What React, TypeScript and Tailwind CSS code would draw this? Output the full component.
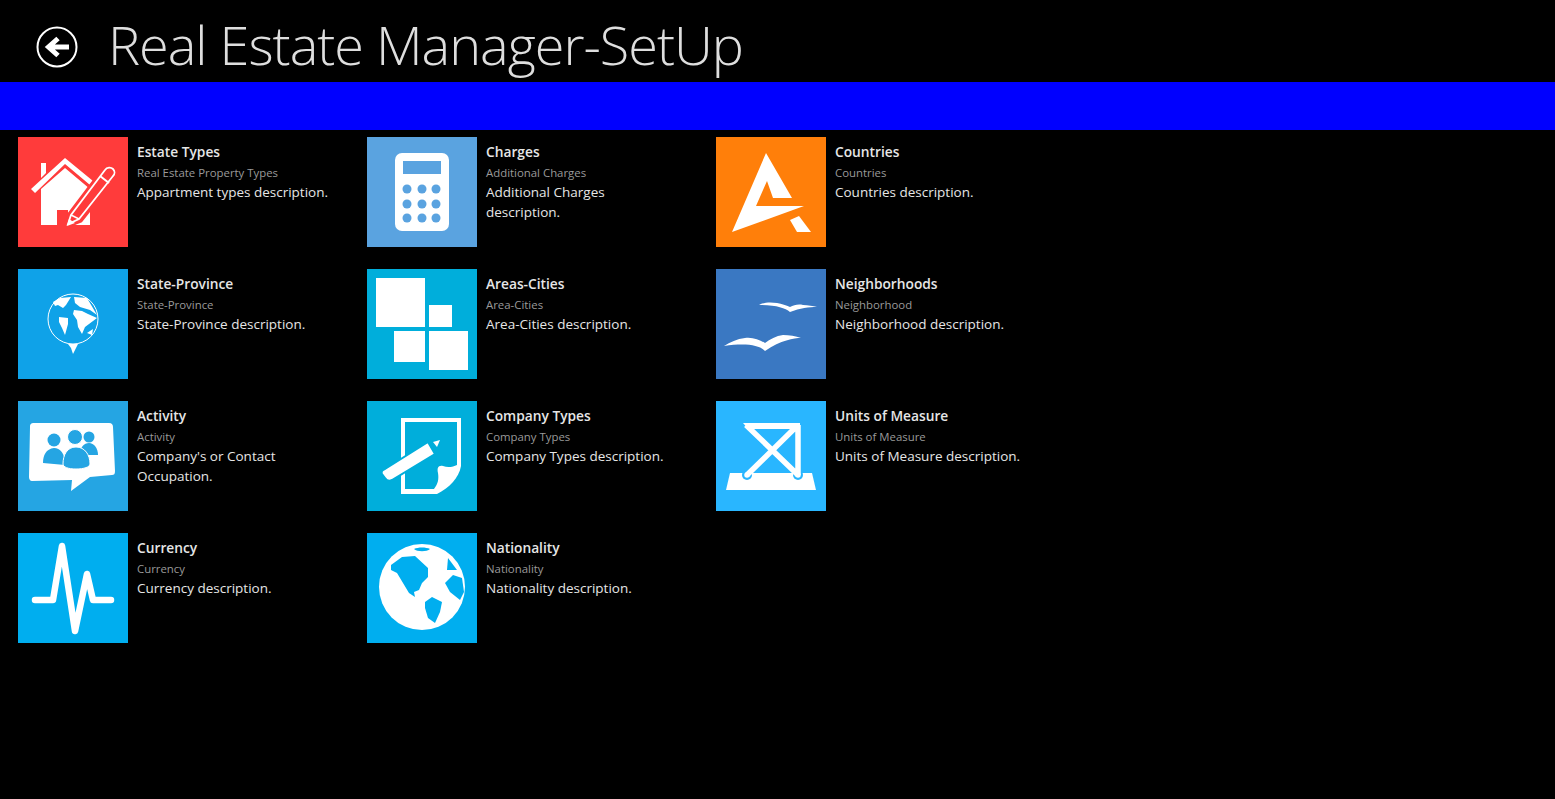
import React from 'react';

const HouseIcon = () => (
  <svg viewBox="0 0 110 110" className="h-full w-full">
    <path d="M23 26h5v10l-5 5z" fill="#fff" />
    <path d="M13 52L47 21l28 23-3 4-25-21-30 29z" fill="#fff" />
    <path d="M23 52L47 31l25 21v36H50V73H39v15H23z" fill="#fff" />
    <path d="M48 90l3-13 34-45c3-3 8-4 11-1s3 7 1 10L63 84z" fill="#ff3b3b" stroke="#ff3b3b" strokeWidth="3" />
    <path d="M50 87l3-9 34-45c2-3 6-3 8-1s2 5 0 7L61 82z" fill="#ff3b3b" stroke="#fff" strokeWidth="1.8" />
    <path d="M82 39l9 7" stroke="#fff" strokeWidth="2" />
    <path d="M53 78l8 4" stroke="#fff" strokeWidth="1.5" />
    <path d="M49 89l2-7 6 4z" fill="#fff" />
  </svg>
);

const SmallGlobeIcon = () => (
  <svg viewBox="0 0 110 110" className="h-full w-full">
    <circle cx="55" cy="50" r="25" fill="none" stroke="#fff" strokeWidth="1" />
    <path d="M50 75h10l-2 4-3 6-2-6z" fill="#fff" />
    <path d="M35 33l7-4 11-1-5 8-3 3-5-3-3 1z" fill="#fff" />
    <path d="M41 48l9 1 0 6-3 11-3-7-3-6z" fill="#fff" />
    <path d="M56 41l8 1 6 3 9 4-12 9-3 7-4-7-1-7-4-6z" fill="#fff" />
    <path d="M56 28l13 1 10 17-7-5-10-3-5-4z" fill="#fff" />
    <path d="M69 64l6-4-1 6z" fill="#fff" />
  </svg>
);

const ActivityIcon = () => (
  <svg viewBox="0 0 110 110" className="h-full w-full">
    <path d="M16 22h75c3 0 4 2 4 4l2 44c0 3-1 4-3 4l-22 2-19 14 1-11-40 1c-2 0-3-2-3-4l1-50c0-3 1-4 4-4z" fill="#fff" />
    <circle cx="36" cy="39" r="6.500" fill="#25a5e3" />
    <path d="M25 62c0-8 3-14 11-15 6 0 11 5 11 17z" fill="#25a5e3" />
    <circle cx="71" cy="36" r="5.500" fill="#25a5e3" />
    <path d="M62 54c0-8 4-12 9-12 5 0 9 5 9 12z" fill="#25a5e3" />
    <circle cx="57" cy="36" r="7.500" fill="#25a5e3" stroke="#fff" strokeWidth="1" />
    <path d="M45 63c0-9 4-17 13-17 9 0 14 8 14 17 0 3-6 5-14 5s-13-2-13-5z" fill="#25a5e3" stroke="#fff" strokeWidth="1" />
  </svg>
);

const PulseIcon = () => (
  <svg viewBox="0 0 110 110" className="h-full w-full">
    <path d="M17 67h18l9-54 13 85 12-57 6 26h18" fill="none" stroke="#fff" strokeWidth="6.500" strokeLinecap="round" strokeLinejoin="round" />
  </svg>
);

const CalculatorIcon = () => {
  const xs = [40, 55, 69];
  const ys = [52, 67, 81];
  return (
    <svg viewBox="0 0 110 110" className="h-full w-full">
      <rect x="28" y="16" width="54" height="78" rx="7" fill="#fff" />
      <rect x="36" y="24" width="38" height="13" fill="#5aa3e0" />
      {ys.map((y) => xs.map((x) => <circle key={`${x}-${y}`} cx={x} cy={y} r="4.500" fill="#5aa3e0" />))}
    </svg>
  );
};

const SquaresIcon = () => (
  <svg viewBox="0 0 110 110" className="h-full w-full" fill="#fff">
    <rect x="9" y="9" width="49" height="49" />
    <rect x="62" y="36" width="23" height="22" />
    <rect x="27" y="62" width="31" height="31" />
    <rect x="62" y="62" width="39" height="39" />
  </svg>
);

const NoteIcon = () => (
  <svg viewBox="0 0 110 110" className="h-full w-full">
    <path d="M34 17h60v48c-2 12-12 22-24 28H34z" fill="#fff" />
    <path d="M38 21h52v43c-4 2-9 3-14 1-5-1-6 2-5 7 1 6 0 11-4 16H38z" fill="#00aedb" />
    <path d="M18 68l43-27 7 12-43 26c-2 1-5 1-7-2l-3-4c-1-2 0-4 3-5z" fill="#fff" stroke="#00aedb" strokeWidth="2" />
    <path d="M66 41l7-2-3 7z" fill="#fff" />
  </svg>
);

const GlobeIcon = () => (
  <svg viewBox="0 0 110 110" className="h-full w-full">
    <circle cx="55" cy="54" r="43" fill="#fff" />
    <path d="M47 16c4-2 12-2 16 0-3 3-13 3-16 0z" fill="#00aeef" />
    <path d="M24 32l11-8 13-1 13 12 0 9-6 6-3 7-5 2 1 5-6-4-12-20-6-3z" fill="#00aeef" />
    <path d="M58 69l7-5 10 5-2 10-5 11-7-5-3-10z" fill="#00aeef" />
    <path d="M81 25l9 12H80z" fill="#00aeef" />
    <path d="M78 50l8-8 9 3 2 14-4 8-10-8z" fill="#00aeef" />
  </svg>
);

const LogoAIcon = () => (
  <svg viewBox="0 0 110 110" className="h-full w-full" fill="#fff">
    <path d="M50 16L76 61H57L51 44 40 69H88L16 95z" />
    <path d="M83 79L95 95H81L74 83z" />
  </svg>
);

const BirdsIcon = () => (
  <svg viewBox="0 0 110 110" className="h-full w-full" fill="#fff">
    <path d="M43 36c5-3 12-3 18-2 5 1 9 2 13 4 4-2 8-3 13-2 5 0 10 1 14 2-8 0-17 1-27 5-5-4-14-7-31-7z" />
    <path d="M8 77c6-4 13-7 21-8 8-1 15 2 20 5 5-4 11-7 18-8 6 0 13 1 18 3-7 0-20 2-36 13-6-6-19-8-41-5z" />
  </svg>
);

const ToolIcon = () => (
  <svg viewBox="0 0 110 110" className="h-full w-full">
    <path d="M14 72h82l4 17H10z" fill="#fff" />
    <circle cx="31" cy="74" r="5" fill="#29b6ff" />
    <circle cx="82" cy="74" r="5" fill="#29b6ff" />
    <path d="M30 24l52 50M82 24L31 74M82 24v50" fill="none" stroke="#fff" strokeWidth="5.500" />
    <circle cx="31" cy="74" r="2.750" fill="#fff" />
    <circle cx="82" cy="74" r="2.750" fill="#fff" />
    <path d="M27 22h57v6H38l-4 2z" fill="#fff" />
  </svg>
);

const items = [
  { title: 'Estate Types', sub: 'Real Estate Property Types', desc: 'Appartment types description.', tile: 'bg-[#ff3b3b]', icon: <HouseIcon /> },
  { title: 'Charges', sub: 'Additional Charges', desc: 'Additional Charges description.', tile: 'bg-[#5aa3e0]', icon: <CalculatorIcon /> },
  { title: 'Countries', sub: 'Countries', desc: 'Countries description.', tile: 'bg-[#ff7f0a]', icon: <LogoAIcon /> },
  { title: 'State-Province', sub: 'State-Province', desc: 'State-Province description.', tile: 'bg-[#0fa2e8]', icon: <SmallGlobeIcon /> },
  { title: 'Areas-Cities', sub: 'Area-Cities', desc: 'Area-Cities description.', tile: 'bg-[#00aedb]', icon: <SquaresIcon /> },
  { title: 'Neighborhoods', sub: 'Neighborhood', desc: 'Neighborhood description.', tile: 'bg-[#3a78c2]', icon: <BirdsIcon /> },
  { title: 'Activity', sub: 'Activity', desc: "Company's or Contact Occupation.", tile: 'bg-[#25a5e3]', icon: <ActivityIcon /> },
  { title: 'Company Types', sub: 'Company Types', desc: 'Company Types description.', tile: 'bg-[#00aedb]', icon: <NoteIcon /> },
  { title: 'Units of Measure', sub: 'Units of Measure', desc: 'Units of Measure description.', tile: 'bg-[#29b6ff]', icon: <ToolIcon /> },
  { title: 'Currency', sub: 'Currency', desc: 'Currency description.', tile: 'bg-[#00aeef]', icon: <PulseIcon /> },
  { title: 'Nationality', sub: 'Nationality', desc: 'Nationality description.', tile: 'bg-[#00aeef]', icon: <GlobeIcon /> },
];

export default function App() {
  return (
    <div className="h-[799px] w-[1555px] overflow-hidden bg-black font-['Open_Sans',sans-serif]">
      {/* Header */}
      <div className="flex h-[82px] items-center pl-[36px]">
        <svg viewBox="0 0 42 42" className="h-[42px] w-[42px] mt-[12px]">
          <circle cx="21" cy="21" r="19.500" fill="none" stroke="#fff" strokeWidth="2" />
          <path d="M33 21H13M22 12.500L12.500 21l9.500 8.500" fill="none" stroke="#fff" strokeWidth="5" />
        </svg>
        <h1 className="mt-[6px] ml-[30px] text-[54px] leading-none font-light tracking-[-1px] whitespace-nowrap text-[#dedede]">
          Real Estate Manager-SetUp
        </h1>
      </div>

      <div className="h-[48px] bg-[#0000ff]" />

      {/* Tiles */}
      <div className="grid grid-cols-[349px_349px_349px] gap-y-[22px] pt-[7px] pl-[18px]">
        {items.map((item) => (
          <div key={item.title} className="flex h-[110px] gap-[9px]">
            <div className={`h-[110px] w-[110px] shrink-0 ${item.tile}`}>{item.icon}</div>
            <div className="w-[194px]">
              <div className="mt-[4px] text-[13.750px] leading-[22px] font-semibold text-[#e6e6e6]">{item.title}</div>
              <div className="text-[11.400px] leading-[19px] text-[#9a9a9a]">{item.sub}</div>
              <div className="text-[13.500px] leading-[20px] text-[#e6e6e6]">{item.desc}</div>
            </div>
          </div>
        ))}
      </div>
    </div>
  );
}
